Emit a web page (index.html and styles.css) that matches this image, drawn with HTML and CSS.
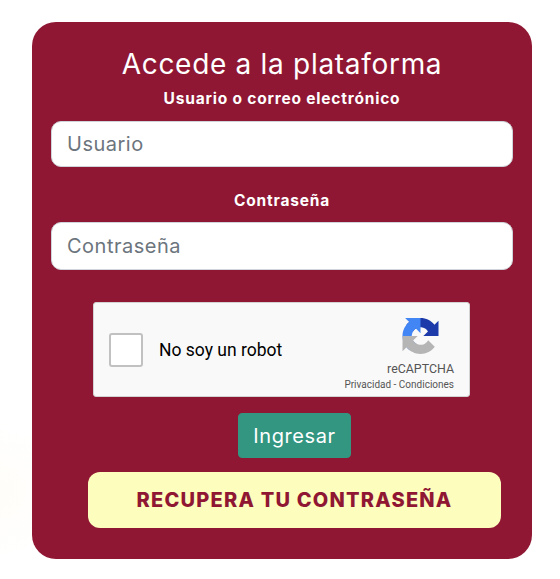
FILE: index.html
```html
<!DOCTYPE html>
<html lang="es">
<head>
<meta charset="utf-8">
<title>Accede a la plataforma</title>
<link rel="stylesheet" href="styles.css">
</head>
<body>
<form class="card">
  <h1 class="title">Accede a la plataforma</h1>
  <label class="label label-user" for="u">Usuario o correo electrónico</label>
  <input class="field field-user" id="u" type="text" placeholder="Usuario">
  <label class="label label-pass" for="p">Contraseña</label>
  <input class="field field-pass" id="p" type="text" placeholder="Contraseña">
  <div class="captcha">
    <span class="check"></span>
    <span class="robot">No soy un robot</span>
    <div class="brand">
      <svg class="logo" viewBox="0 0 64 64" aria-hidden="true">
        <path fill="#1c3aa9" d="M64 32V4.7l-7.2 7.2C50.9 4.7 42 0 32 0 21.6 0 12.4 5 6.6 12.7l11.8 11.9c1.2-2.1 2.8-3.9 4.8-5.3 2-1.6 5-2.9 9-2.9.5 0 .9.1 1.2.2 5 .4 9.4 3.2 11.9 7.2L37 32c10.5 0 22.4 0 27 0z"/>
        <path fill="#4285f4" transform="rotate(-90 32 32)" d="M64 32V4.7l-7.2 7.2C50.9 4.7 42 0 32 0 21.6 0 12.4 5 6.6 12.7l11.8 11.9c1.2-2.1 2.8-3.9 4.8-5.3 2-1.6 5-2.9 9-2.9.5 0 .9.1 1.2.2 5 .4 9.4 3.2 11.9 7.2L37 32c10.5 0 22.4 0 27 0z"/>
        <path fill="#b5b5b5" transform="rotate(180 32 32)" d="M64 32V4.7l-7.2 7.2C50.9 4.7 42 0 32 0 21.6 0 12.4 5 6.6 12.7l11.8 11.9c1.2-2.1 2.8-3.9 4.8-5.3 2-1.6 5-2.9 9-2.9.5 0 .9.1 1.2.2 5 .4 9.4 3.2 11.9 7.2L37 32c10.5 0 22.4 0 27 0z"/>
      </svg>
      <span class="brand-name">reCAPTCHA</span>
      <span class="brand-links">Privacidad - Condiciones</span>
    </div>
  </div>
  <button class="submit" type="button">Ingresar</button>
  <button class="recover" type="button">RECUPERA TU CONTRASEÑA</button>
</form>
</body>
</html>
```

FILE: styles.css
```css
* { box-sizing: border-box; }
html, body { height: 100%; }
body {
  margin: 0;
  padding: 22px 28px 20px 32px;
  overflow: hidden;
  background: radial-gradient(circle at 0 85%, #fefdf9 0, #ffffff 70px);
  font-family: Inter, "Liberation Sans", sans-serif;
}
.card {
  width: 500px;
  height: 537px;
  display: flex;
  flex-direction: column;
  align-items: center;
  padding-top: 25px;
  background: #8f1733;
  border-radius: 24px;
  color: #fff;
}
.title {
  margin: 0;
  font-size: 28px;
  line-height: 35px;
  font-weight: 400;
  letter-spacing: 0.7px;
}
.label {
  font-size: 15.5px;
  line-height: 20px;
  font-weight: 700;
  letter-spacing: 0.8px;
}
.label-user { margin-top: 7px; }
.label-pass { margin-top: 24px; }
.field {
  display: block;
  width: 462px;
  padding: 0 15px;
  background: #fff;
  border: 1px solid #ced4da;
  border-radius: 10px;
  font-family: inherit;
  font-size: 20px;
  letter-spacing: 0.5px;
  color: #495057;
}
.field::placeholder { color: #6c757d; opacity: 1; }
.field-user { height: 46px; margin-top: 12px; }
.field-pass { height: 48px; margin-top: 11px; }
.captcha {
  width: 377px;
  height: 95px;
  margin: 32px 1px 0 0;
  padding: 0 15px;
  display: flex;
  align-items: center;
  background: #f9f9f9;
  border: 1px solid #d3d3d3;
  border-radius: 3px;
  font-family: Roboto, sans-serif;
}
.check {
  width: 34px;
  height: 34px;
  margin-right: 16px;
  background: #fff;
  border: 2px solid #c1c1c1;
  border-radius: 3px;
}
.robot {
  flex: 1;
  font-size: 17.5px;
  color: #000;
}
.brand {
  display: flex;
  flex-direction: column;
  align-items: flex-end;
  align-self: flex-start;
  padding-top: 15px;
}
.logo {
  display: block;
  width: 37px;
  height: 36px;
  margin-right: 15px;
}
.brand-name {
  margin-top: 8px;
  font-size: 12.4px;
  line-height: 14px;
  color: #555;
}
.brand-links {
  margin-top: 2px;
  font-size: 10px;
  line-height: 13px;
  color: #555;
}
.submit {
  width: 113px;
  height: 45px;
  margin: 16px 0 0 25px;
  padding: 0;
  background: #329681;
  border: 1px solid #329681;
  border-radius: 4px;
  color: #fff;
  font-family: inherit;
  font-size: 20px;
  letter-spacing: 0.6px;
}
.recover {
  width: 413px;
  height: 56px;
  margin: 14px 0 0 25px;
  padding: 0;
  background: #fdfdbd;
  border: 0;
  border-radius: 12px;
  color: #8f1733;
  font-family: inherit;
  font-size: 20px;
  font-weight: 800;
  letter-spacing: 1.22px;
}
```
